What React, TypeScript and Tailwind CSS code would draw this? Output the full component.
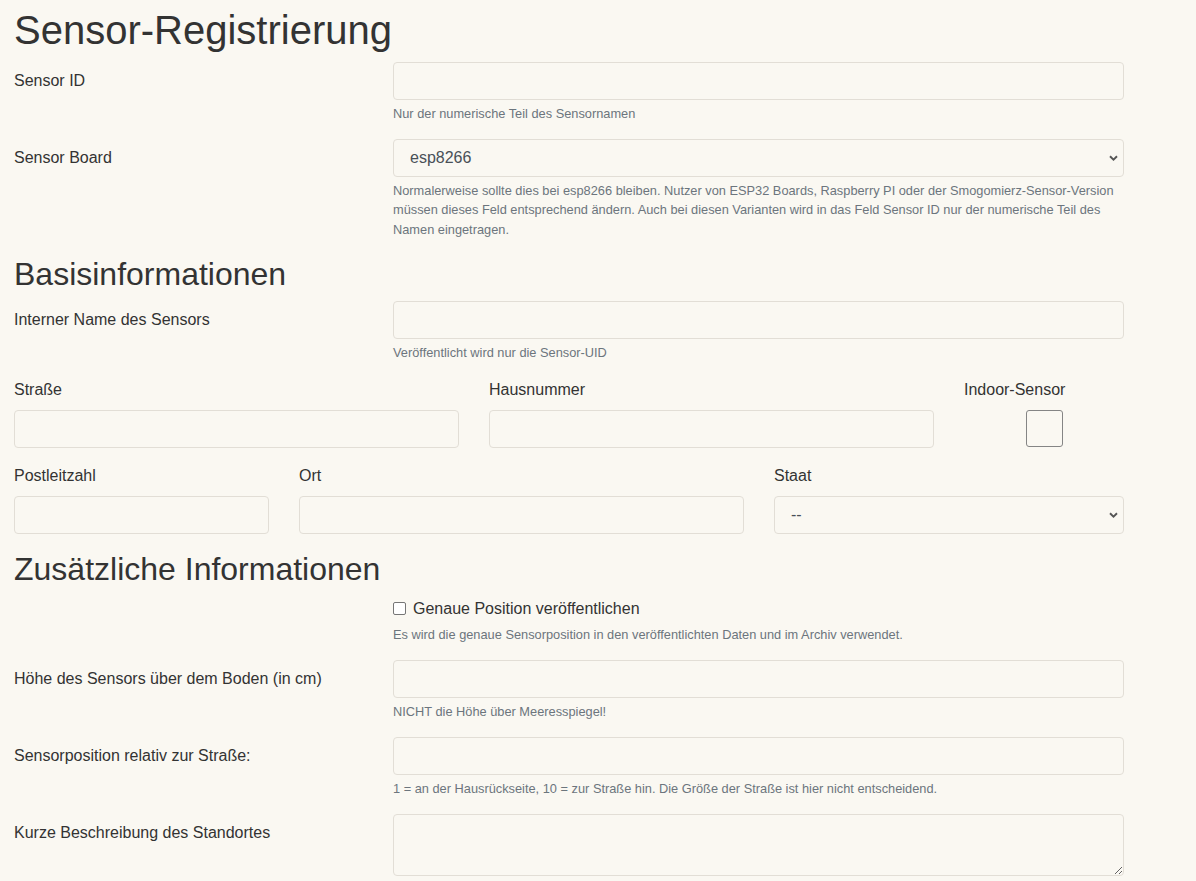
import React from "react";

const inputCls =
  "block w-full h-[38px] px-3 py-[6px] text-[16px] leading-[24px] text-[#495057] bg-transparent border border-[#e2ded6] rounded-[4px] outline-none";

function Help({ children }: { children: React.ReactNode }) {
  return <div className="mt-1 text-[12.8px] leading-[19.2px] text-[#6c757d]">{children}</div>;
}

function FakeSelect({ value }: { value: string }) {
  return (
    <div className="flex items-center justify-between w-full h-[38px] pl-4 pr-[5px] border border-[#e2ded6] rounded-[4px] text-[16px] leading-[24px] text-[#495057]">
      <span>{value}</span>
      <svg width="9" height="6" viewBox="0 0 9 6" className="mr-0">
        <path d="M1 1.2 L4.5 4.6 L8 1.2" fill="none" stroke="#555" strokeWidth="1.9" />
      </svg>
    </div>
  );
}

function Row({ label, children }: { label: string; children: React.ReactNode }) {
  return (
    <div className="flex gap-[29px] mb-4">
      <div className="w-[350px] shrink-0 pt-[7px] pb-[7px] leading-[24px]">{label}</div>
      <div className="w-[731px]">{children}</div>
    </div>
  );
}

export default function App() {
  return (
    <div
      className="min-h-screen bg-[#faf8f2] text-[#333] text-[16px] leading-[24px]"
      style={{ fontFamily: '"Liberation Sans", Arial, sans-serif' }}
    >
      <div className="w-[1110px] ml-[14px] pt-[6px] pb-10">
        <h1 className="text-[40px] leading-[48px] font-normal mb-2">Sensor-Registrierung</h1>

        <Row label="Sensor ID">
          <input className={inputCls} type="text" />
          <Help>Nur der numerische Teil des Sensornamen</Help>
        </Row>

        <Row label="Sensor Board">
          <FakeSelect value="esp8266" />
          <Help>
            Normalerweise sollte dies bei esp8266 bleiben. Nutzer von ESP32 Boards, Raspberry PI oder der
            Smogomierz-Sensor-Version müssen dieses Feld entsprechend ändern. Auch bei diesen Varianten wird in das
            Feld Sensor ID nur der numerische Teil des Namen eingetragen.
          </Help>
        </Row>

        <h2 className="text-[32px] leading-[38.4px] font-normal mb-2">Basisinformationen</h2>

        <Row label="Interner Name des Sensors">
          <input className={inputCls} type="text" />
          <Help>Veröffentlicht wird nur die Sensor-UID</Help>
        </Row>

        <div className="flex gap-[30px] mb-4">
          <div className="w-[445px]">
            <div className="mb-2">Straße</div>
            <input className={inputCls} type="text" />
          </div>
          <div className="w-[445px]">
            <div className="mb-2">Hausnummer</div>
            <input className={inputCls} type="text" />
          </div>
          <div className="w-[160px]">
            <div className="mb-2">Indoor-Sensor</div>
            <div className="w-[37px] h-[37px] mx-auto border border-[#858585] rounded-[3px]" />
          </div>
        </div>

        <div className="flex gap-[30px] mb-4">
          <div className="w-[255px]">
            <div className="mb-2">Postleitzahl</div>
            <input className={inputCls} type="text" />
          </div>
          <div className="w-[445px]">
            <div className="mb-2">Ort</div>
            <input className={inputCls} type="text" />
          </div>
          <div className="w-[350px]">
            <div className="mb-2">Staat</div>
            <FakeSelect value="--" />
          </div>
        </div>

        <h2 className="text-[32px] leading-[38.4px] font-normal mb-2">Zusätzliche Informationen</h2>

        <div className="flex gap-[29px] mb-4">
          <div className="w-[350px] shrink-0" />
          <div className="w-[731px]">
            <div className="flex items-start">
              <span className="block w-[13px] h-[13px] mt-[5px] border border-[#767676] rounded-[2px] bg-white" />
              <span className="ml-[7px]">Genaue Position veröffentlichen</span>
            </div>
            <Help>Es wird die genaue Sensorposition in den veröffentlichten Daten und im Archiv verwendet.</Help>
          </div>
        </div>

        <Row label="Höhe des Sensors über dem Boden (in cm)">
          <input className={inputCls} type="text" />
          <Help>NICHT die Höhe über Meeresspiegel!</Help>
        </Row>

        <Row label="Sensorposition relativ zur Straße:">
          <input className={inputCls} type="text" />
          <Help>1 = an der Hausrückseite, 10 = zur Straße hin. Die Größe der Straße ist hier nicht entscheidend.</Help>
        </Row>

        <Row label="Kurze Beschreibung des Standortes">
          <textarea
            rows={2}
            className="block w-full h-[62px] px-3 py-[6px] text-[16px] leading-[24px] text-[#495057] bg-transparent border border-[#e2ded6] rounded-[4px] outline-none"
          />
        </Row>
      </div>
    </div>
  );
}
